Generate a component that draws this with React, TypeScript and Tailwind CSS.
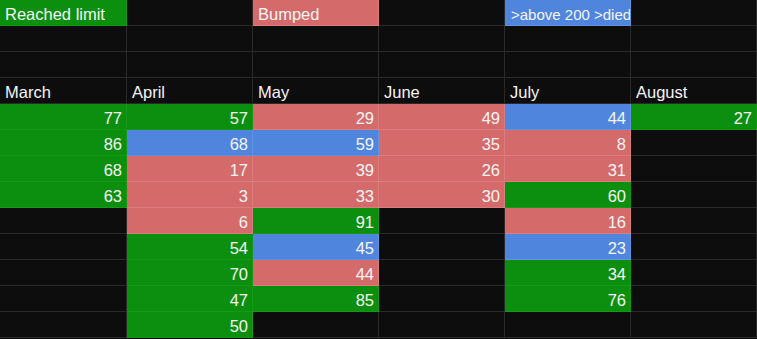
import clsx from 'clsx';

type Tone = 'g' | 'r' | 'b' | '';
type Cell = { v?: string; t?: Tone; num?: boolean; small?: boolean };

const toneClass: Record<string, string> = {
    g: 'bg-[#0c8f0e] border-[#129a14]',
    r: 'bg-[#d56a6a] border-[#dc7c7c]',
    b: 'bg-[#4f85dc] border-[#6193e2]',
    '': 'bg-[#0d0d0d] border-[#2a2a2a]',
};

const e: Cell = {};
const n = (v: string, t: Tone): Cell => ({ v, t, num: true });
const h = (v: string): Cell => ({ v });

const rows: Cell[][] = [
    [{ v: 'Reached limit', t: 'g' }, e, { v: 'Bumped', t: 'r' }, e, { v: '>above 200 >died', t: 'b', small: true }, e],
    [e, e, e, e, e, e],
    [e, e, e, e, e, e],
    [h('March'), h('April'), h('May'), h('June'), h('July'), h('August')],
    [n('77', 'g'), n('57', 'g'), n('29', 'r'), n('49', 'r'), n('44', 'b'), n('27', 'g')],
    [n('86', 'g'), n('68', 'b'), n('59', 'b'), n('35', 'r'), n('8', 'r'), e],
    [n('68', 'g'), n('17', 'r'), n('39', 'r'), n('26', 'r'), n('31', 'r'), e],
    [n('63', 'g'), n('3', 'r'), n('33', 'r'), n('30', 'r'), n('60', 'g'), e],
    [e, n('6', 'r'), n('91', 'g'), e, n('16', 'r'), e],
    [e, n('54', 'g'), n('45', 'b'), e, n('23', 'b'), e],
    [e, n('70', 'g'), n('44', 'r'), e, n('34', 'g'), e],
    [e, n('47', 'g'), n('85', 'g'), e, n('76', 'g'), e],
    [e, n('50', 'g'), e, e, e, e],
];

export default function App() {
    return (
        <div className="w-[757px] h-[339px] overflow-hidden bg-[#0d0d0d] font-['Liberation_Sans',Arial,sans-serif]">
            <div className="grid grid-cols-[127px_126px_126px_126px_126px_126px]">
                {rows.map((row, ri) =>
                    row.map((c, ci) => (
                        <div
                            key={`${ri}-${ci}`}
                            className={clsx(
                                'h-[26px] border-r border-b flex items-end pb-[1px] leading-[19px] text-[#f5f5f5] whitespace-nowrap overflow-hidden',
                                toneClass[c.t || ''],
                                c.small ? 'text-[15px] pl-[6px]' : 'text-[16.5px]',
                                c.num ? 'justify-end pr-[4px]' : !c.small && 'pl-[5px]'
                            )}
                        >
                            {c.v}
                        </div>
                    ))
                )}
            </div>
        </div>
    );
}
